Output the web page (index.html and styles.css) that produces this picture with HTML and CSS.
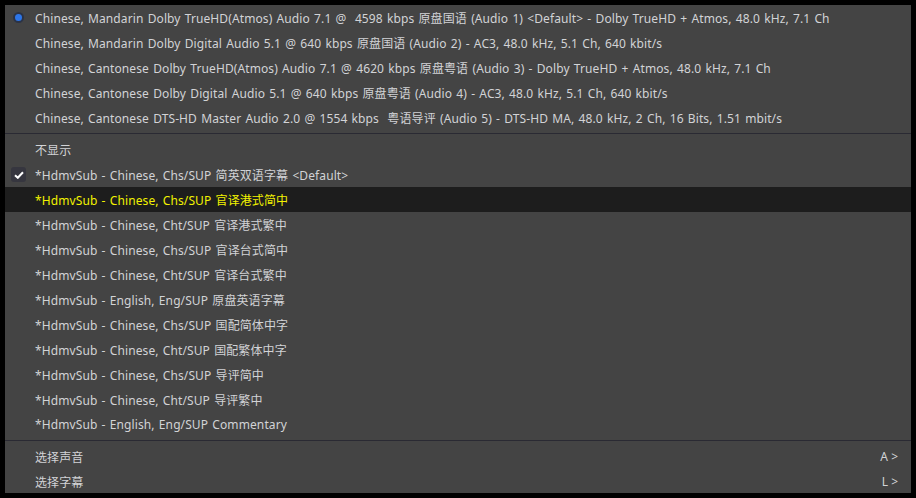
FILE: index.html
```html
<!DOCTYPE html>
<html lang="zh-CN">
<head>
  <meta charset="UTF-8">
  <title>音轨菜单</title>
  <link rel="stylesheet" href="styles.css">
</head>
<body>
  <div class="menu">
    <!-- 音轨 -->
    <div class="item"><span class="mark"><span class="radio"></span></span><span class="label">Chinese, Mandarin Dolby TrueHD(Atmos) Audio 7.1 @&nbsp; 4598 kbps 原盘国语 (Audio 1) &lt;Default&gt; - Dolby TrueHD + Atmos, 48.0 kHz, 7.1 Ch</span></div>
    <div class="item"><span class="mark"></span><span class="label">Chinese, Mandarin Dolby Digital Audio 5.1 @ 640 kbps 原盘国语 (Audio 2) - AC3, 48.0 kHz, 5.1 Ch, 640 kbit/s</span></div>
    <div class="item"><span class="mark"></span><span class="label">Chinese, Cantonese Dolby TrueHD(Atmos) Audio 7.1 @ 4620 kbps 原盘粤语 (Audio 3) - Dolby TrueHD + Atmos, 48.0 kHz, 7.1 Ch</span></div>
    <div class="item"><span class="mark"></span><span class="label">Chinese, Cantonese Dolby Digital Audio 5.1 @ 640 kbps 原盘粤语 (Audio 4) - AC3, 48.0 kHz, 5.1 Ch, 640 kbit/s</span></div>
    <div class="item"><span class="mark"></span><span class="label">Chinese, Cantonese DTS-HD Master Audio 2.0 @ 1554 kbps&nbsp; 粤语导评 (Audio 5) - DTS-HD MA, 48.0 kHz, 2 Ch, 16 Bits, 1.51 mbit/s</span></div>
    <div class="sep"></div>
    <!-- 字幕 -->
    <div class="item"><span class="mark"></span><span class="label">不显示</span></div>
    <div class="item"><span class="mark"><span class="check"><svg width="10" height="8" viewBox="0 0 10 8"><path d="M1 4.2 L3.8 6.8 L9 1.2" fill="none" stroke="#fff" stroke-width="2"/></svg></span></span><span class="label">*HdmvSub - Chinese, Chs/SUP 简英双语字幕 &lt;Default&gt;</span></div>
    <div class="item hover"><span class="mark"></span><span class="label">*HdmvSub - Chinese, Chs/SUP 官译港式简中</span></div>
    <div class="item"><span class="mark"></span><span class="label">*HdmvSub - Chinese, Cht/SUP 官译港式繁中</span></div>
    <div class="item"><span class="mark"></span><span class="label">*HdmvSub - Chinese, Chs/SUP 官译台式简中</span></div>
    <div class="item"><span class="mark"></span><span class="label">*HdmvSub - Chinese, Cht/SUP 官译台式繁中</span></div>
    <div class="item"><span class="mark"></span><span class="label">*HdmvSub - English, Eng/SUP 原盘英语字幕</span></div>
    <div class="item"><span class="mark"></span><span class="label">*HdmvSub - Chinese, Chs/SUP 国配简体中字</span></div>
    <div class="item"><span class="mark"></span><span class="label">*HdmvSub - Chinese, Cht/SUP 国配繁体中字</span></div>
    <div class="item"><span class="mark"></span><span class="label">*HdmvSub - Chinese, Chs/SUP 导评简中</span></div>
    <div class="item"><span class="mark"></span><span class="label">*HdmvSub - Chinese, Cht/SUP 导评繁中</span></div>
    <div class="item"><span class="mark"></span><span class="label">*HdmvSub - English, Eng/SUP Commentary</span></div>
    <div class="sep"></div>
    <div class="item"><span class="mark"></span><span class="label">选择声音</span><span class="key">A &gt;</span></div>
    <div class="item"><span class="mark"></span><span class="label">选择字幕</span><span class="key">L &gt;</span></div>
  </div>
</body>
</html>
```
FILE: styles.css
```css
* {
  margin: 0;
  padding: 0;
  box-sizing: border-box;
}

body {
  background-color: #000;
  width: 916px;
  height: 498px;
  padding: 5px;
  font-family: "Noto Sans", "Noto Sans CJK SC", sans-serif;
  font-size: 12px;
  color: #d2d3d6;
  overflow: hidden;
}

.menu {
  width: 906px;
  height: 488px;
  background-color: #444;
}

.item {
  display: flex;
  align-items: center;
  height: 25px;
  white-space: nowrap;
}

.item.hover {
  background-color: #1d1d1d;
  color: #f2f200;
}

.mark {
  width: 27px;
  margin-right: 3px;
  display: flex;
  justify-content: center;
  align-items: center;
}

.label {
  flex: 1;
  word-spacing: 1px;
  letter-spacing: 0.1px;
}

.key {
  padding-right: 13px;
}

.radio {
  width: 11px;
  height: 11px;
  border-radius: 50%;
  background-color: #2d76e8;
  border: 2px solid #2b3346;
}

.check {
  width: 15px;
  height: 15px;
  border-radius: 3px;
  background-color: #36363f;
  display: flex;
  justify-content: center;
  align-items: center;
}

.sep {
  height: 7px;
  display: flex;
  align-items: center;
}

.sep::before {
  content: "";
  flex: 1;
  height: 1px;
  background-color: #2a2a33;
}
```
